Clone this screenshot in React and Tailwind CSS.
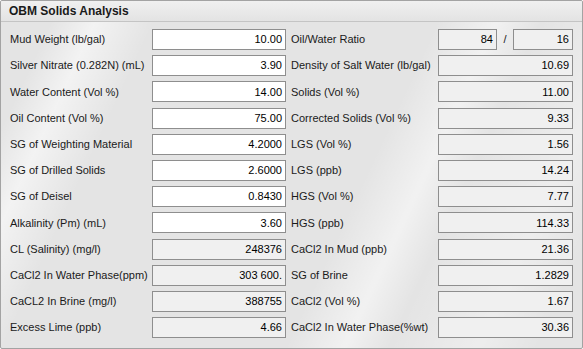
import React from 'react';

const rows = [
  ['Mud Weight (lb/gal)', '10.00', true, 'Oil/Water Ratio', null],
  ['Silver Nitrate (0.282N) (mL)', '3.90', true, 'Density of Salt Water (lb/gal)', '10.69'],
  ['Water Content (Vol %)', '14.00', true, 'Solids (Vol %)', '11.00'],
  ['Oil Content (Vol %)', '75.00', true, 'Corrected Solids (Vol %)', '9.33'],
  ['SG of Weighting Material', '4.2000', true, 'LGS (Vol %)', '1.56'],
  ['SG of Drilled Solids', '2.6000', true, 'LGS (ppb)', '14.24'],
  ['SG of Deisel', '0.8430', true, 'HGS (Vol %)', '7.77'],
  ['Alkalinity (Pm) (mL)', '3.60', true, 'HGS (ppb)', '114.33'],
  ['CL (Salinity) (mg/l)', '248376', false, 'CaCl2 In Mud (ppb)', '21.36'],
  ['CaCl2 In Water Phase(ppm)', '303 600.', false, 'SG of Brine', '1.2829'],
  ['CaCL2 In Brine (mg/l)', '388755', false, 'CaCl2 (Vol %)', '1.67'],
  ['Excess Lime (ppb)', '4.66', false, 'CaCl2 In Water Phase(%wt)', '30.36'],
];

// text box, white when editable, grey when computed
const Box = ({ value, editable, className = '' }) => (
  <div
    className={`h-[21px] border border-[#8e8e8e] flex items-center justify-end pr-[3px] text-black ${
      editable ? 'bg-white' : 'bg-[#f0f0f0]'
    } ${className}`}
  >
    {value}
  </div>
);

export default function App() {
  return (
    <div
      className="w-[583px] h-[349px] text-[11px] text-[#1a1a1a]"
      style={{ fontFamily: '"Liberation Sans", Arial, sans-serif' }}
    >
      <div className="w-full h-full border border-[#a3a3a3] rounded-[2px] flex flex-col overflow-hidden bg-[#e4e4e4] bg-[linear-gradient(115deg,transparent_0%,transparent_8%,rgba(255,255,255,0.55)_14%,transparent_22%,transparent_60%,rgba(255,255,255,0.5)_68%,transparent_74%,rgba(255,255,255,0.35)_86%,transparent_94%)]">
        {/* Title bar */}
        <div className="h-[21px] shrink-0 flex items-center pl-[8px] border-b border-[#c4c4c4] bg-[linear-gradient(#f0f0f0,#e3e3e3)] font-bold text-[12px] text-[#1a1a1a]">
          OBM Solids Analysis
        </div>

        {/* Fields */}
        <div className="pt-[7px] pl-[9px] grid grid-cols-[142px_134px_152px_135px] gap-y-[5.2px]">
          {rows.map(([label, value, editable, rLabel, rValue]) => (
            <React.Fragment key={label}>
              <div className="h-[21px] flex items-center">{label}</div>
              <Box value={value} editable={editable} />
              <div className="h-[21px] flex items-center pl-[5px]">{rLabel}</div>
              {rValue === null ? (
                <div className="flex items-center">
                  <Box value="84" className="w-[59px]" />
                  <span className="w-[16px] text-center">/</span>
                  <Box value="16" className="w-[60px]" />
                </div>
              ) : (
                <Box value={rValue} />
              )}
            </React.Fragment>
          ))}
        </div>
      </div>
    </div>
  );
}
